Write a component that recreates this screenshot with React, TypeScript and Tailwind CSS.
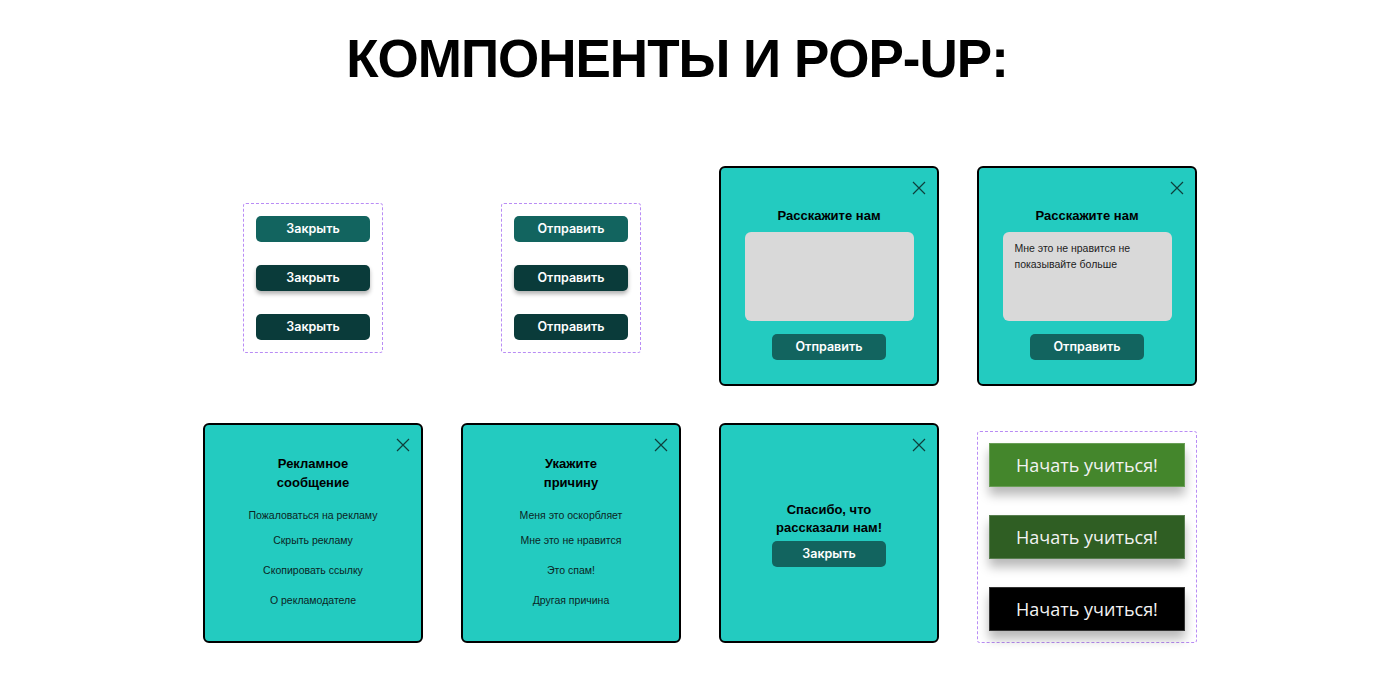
import { ReactNode } from "react";

const arial = { fontFamily: '"Liberation Sans", Arial, sans-serif' };

const CloseIcon = () => (
  <svg
    className="absolute right-[11px] top-[13px] w-[14px] h-[14px]"
    viewBox="0 0 14 14"
    fill="none"
    stroke="#0d3f3c"
    strokeWidth="1.2"
  >
    <path d="M1 1L13 13M13 1L1 13" />
  </svg>
);

const SmallButton = ({
  children,
  dark = false,
  shadow = false,
}: {
  children: ReactNode;
  dark?: boolean;
  shadow?: boolean;
}) => (
  <div
    className={`w-[114px] h-[26px] rounded-[5px] flex items-center justify-center text-white text-[12.5px] font-semibold font-[Inter,sans-serif] ${
      dark ? "bg-[#0a3b3a]" : "bg-[#12645f]"
    } ${shadow ? "shadow-[0_3px_4px_rgba(0,0,0,0.3)]" : ""}`}
  >
    {children}
  </div>
);

const Popup = ({ children }: { children: ReactNode }) => (
  <div className="relative w-[220px] h-[220px] bg-[#23cbc0] border-2 border-black rounded-[6px]">
    <CloseIcon />
    {children}
  </div>
);

const ButtonSet = ({ label }: { label: string }) => (
  <div className="mt-[4px] flex flex-col gap-[23px] p-[12px] border border-dashed border-[#b98cf5] rounded-[3px]">
    <SmallButton>{label}</SmallButton>
    <SmallButton dark shadow>
      {label}
    </SmallButton>
    <SmallButton dark>{label}</SmallButton>
  </div>
);

const TellUs = ({ lines }: { lines?: string[] }) => (
  <Popup>
    <div className="flex flex-col items-center pt-[40px]" style={arial}>
      <h3 className="text-[13px] font-bold leading-[16px] text-black">
        Расскажите нам
      </h3>
      <div className="mt-[8px] w-[169px] h-[89px] rounded-[6px] bg-[#d9d9d9] px-[12px] pt-[8px] text-[10.5px] leading-[16px] text-[#1c1c1c]">
        {lines?.map((l) => (
          <p key={l}>{l}</p>
        ))}
      </div>
      <div className="mt-[13px]">
        <SmallButton>Отправить</SmallButton>
      </div>
    </div>
  </Popup>
);

const MenuPopup = ({ title, items }: { title: string[]; items: string[] }) => (
  <Popup>
    <div className="flex flex-col items-center pt-[29px] text-black" style={arial}>
      <h3 className="text-[13px] font-bold leading-[19px] text-center">
        {title[0]}
        <br />
        {title[1]}
      </h3>
      <ul className="mt-[16px] flex flex-col items-center text-[10.5px] leading-[14px] text-[#0b2524]">
        {items.map((item, i) => (
          <li key={item} className={i === 0 ? "" : i === 1 ? "mt-[11px]" : "mt-[16px]"}>
            {item}
          </li>
        ))}
      </ul>
    </div>
  </Popup>
);

const StartButton = ({ bg }: { bg: string }) => (
  <div
    className={`w-[196px] h-[44px] flex items-center justify-center border border-white/20 text-[18px] text-[#f2f2f2] shadow-[0_8px_10px_rgba(0,0,0,0.28)] ${bg}`}
    style={{ fontFamily: '"Open Sans", sans-serif' }}
  >
    Начать учиться!
  </div>
);

export default function App() {
  return (
    <div className="w-[1400px] h-[679px] bg-white overflow-hidden">
      <h1
        className="pt-[28px] pr-[46px] text-center text-[53px] leading-[62px] font-bold text-black tracking-[-1px]"
        style={arial}
      >
        КОМПОНЕНТЫ И POP-UP:
      </h1>
      <div className="mt-[76px] grid grid-cols-[repeat(4,220px)] gap-x-[38px] gap-y-[37px] justify-center">
        <div className="h-[220px] flex items-center justify-center">
          <ButtonSet label="Закрыть" />
        </div>
        <div className="h-[220px] flex items-center justify-center">
          <ButtonSet label="Отправить" />
        </div>
        <TellUs />
        <TellUs lines={["Мне это не нравится не", "показывайте больше"]} />
        <MenuPopup
          title={["Рекламное", "сообщение"]}
          items={[
            "Пожаловаться на рекламу",
            "Скрыть рекламу",
            "Скопировать ссылку",
            "О рекламодателе",
          ]}
        />
        <MenuPopup
          title={["Укажите", "причину"]}
          items={[
            "Меня это оскорбляет",
            "Мне это не нравится",
            "Это спам!",
            "Другая причина",
          ]}
        />
        <Popup>
          <div className="h-full flex flex-col items-center justify-center pt-[2px]" style={arial}>
            <h3 className="text-[13px] font-bold leading-[18px] text-center text-black">
              Спасибо, что
              <br />
              рассказали нам!
            </h3>
            <div className="mt-[4px]">
              <SmallButton>Закрыть</SmallButton>
            </div>
          </div>
        </Popup>
        <div className="h-[220px] pt-[8px]">
          <div className="flex flex-col gap-[28px] p-[11px] border border-dashed border-[#b98cf5] rounded-[3px]">
            <StartButton bg="bg-[#44862c]" />
            <StartButton bg="bg-[#2f5e23]" />
            <StartButton bg="bg-black" />
          </div>
        </div>
      </div>
    </div>
  );
}
